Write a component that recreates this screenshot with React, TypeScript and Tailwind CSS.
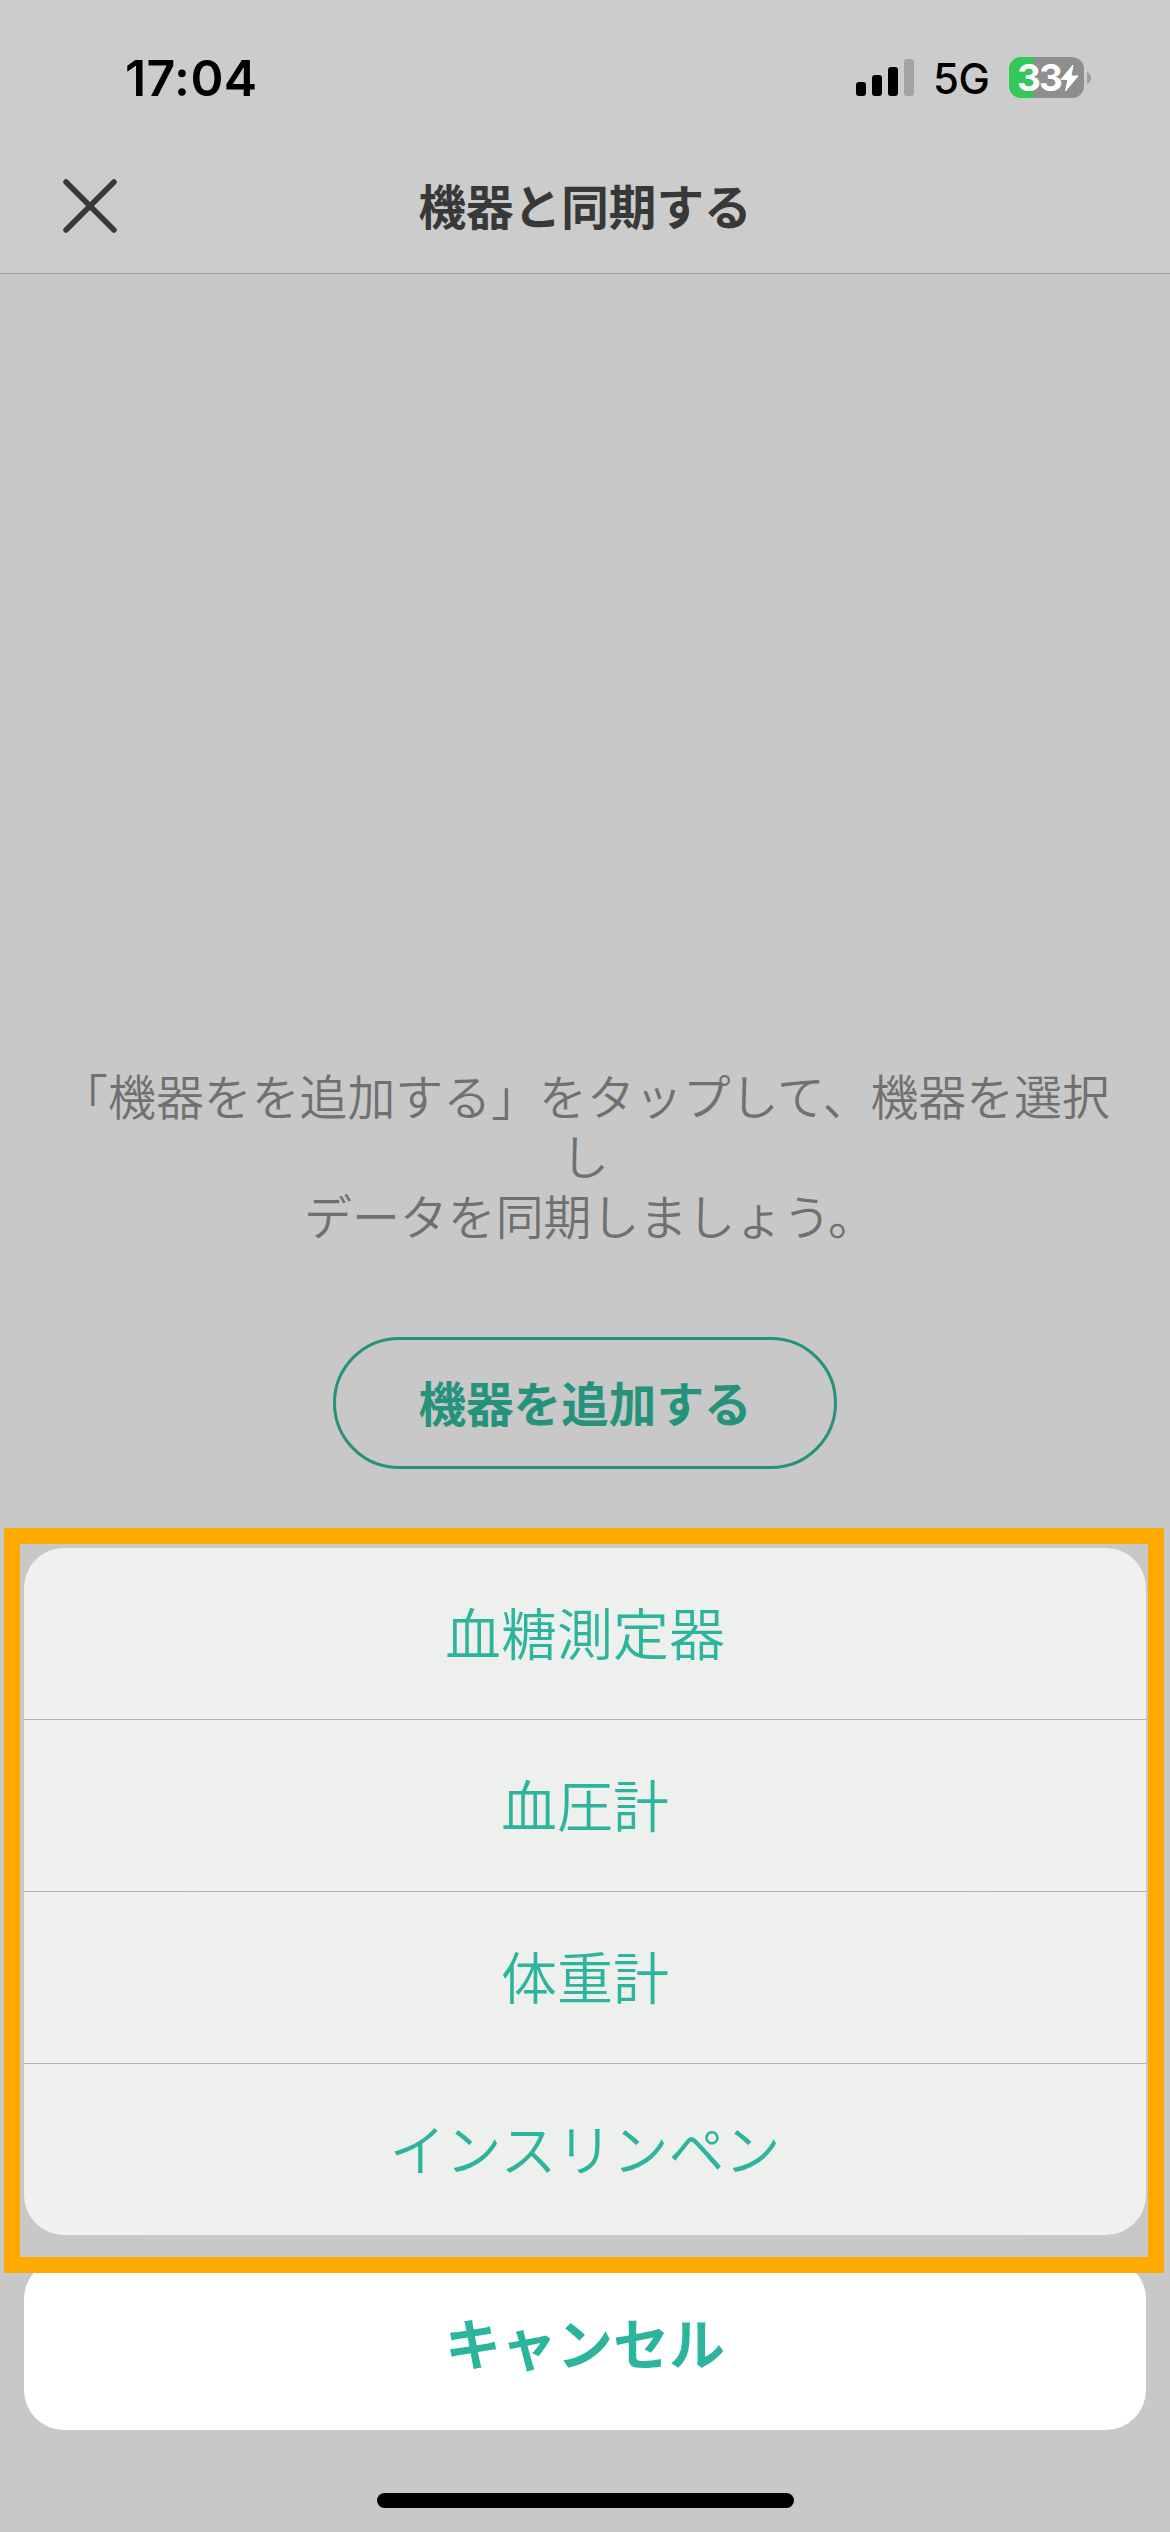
const devices = ['血糖測定器', '血圧計', '体重計', 'インスリンペン']

function SignalIcon() {
  return (
    <svg width="58" height="37" viewBox="0 0 58 37" className="block">
      <rect x="0" y="23" width="10" height="14" rx="3" />
      <rect x="16" y="16" width="10" height="21" rx="3" />
      <rect x="32" y="8" width="10" height="29" rx="3" />
      <rect x="48" y="0" width="10" height="37" rx="3" fill="#a3a3a3" />
    </svg>
  )
}

function Battery() {
  return (
    <div className="flex items-center">
      <div className="flex h-[41px] w-[75px] items-center rounded-[12px] bg-[linear-gradient(90deg,#34c759_25px,#8e8e8e_25px)] pl-[8px]">
        <span className="w-[43px] text-[37px] leading-[41px] font-bold tracking-[-1.8px] text-white">33</span>
        <svg width="19" height="28" viewBox="0 0 19 28" className="block">
          <path d="M13 1 1 15.5h7L5.5 27 18 12h-7z" fill="#fff" stroke="#fff" strokeWidth="1" strokeLinejoin="round" />
        </svg>
      </div>
      <svg width="4" height="12" viewBox="0 0 4 12" className="ml-[3px] block">
        <path d="M0 0c2.4 1 4 3.3 4 6s-1.6 5-4 6z" fill="#a0a0a0" />
      </svg>
    </div>
  )
}

function StatusBar() {
  return (
    <div className="flex h-[156px] items-start justify-between pt-[56px] pr-[79px] pl-[125px] font-['Inter',sans-serif] text-black">
      <span className="text-[50px] leading-[44px] font-semibold tracking-[0.4px]">17:04</span>
      <div className="flex items-start">
        <div className="pt-[3px]">
          <SignalIcon />
        </div>
        <span className="ml-[19px] w-[57px] text-[42px] leading-[46px] font-medium tracking-[-0.5px]">5G</span>
        <div className="ml-[19px] pt-[1px]">
          <Battery />
        </div>
      </div>
    </div>
  )
}

export default function App() {
  return (
    <div
      lang="ja"
      className="relative flex h-[2532px] w-[1170px] flex-col overflow-hidden bg-[#c8c8c8] font-['Noto_Sans_CJK_JP',sans-serif]"
    >
      <div className="h-[274px] border-b border-[#a0a0a0] bg-[#ccc]">
        <StatusBar />
        <header className="grid h-[100px] grid-cols-[180px_1fr_180px] items-center">
          <button className="pl-[63px]" aria-label="閉じる">
            <svg width="54" height="54" viewBox="0 0 54 54" className="block">
              <path d="M3 3 51 51M51 3 3 51" stroke="#383838" strokeWidth="5.5" strokeLinecap="round" />
            </svg>
          </button>
          <h1 className="pb-[2px] text-center text-[47.6px] leading-[60px] font-bold text-[#383838]">機器と同期する</h1>
        </header>
      </div>

      <p className="mt-[790px] px-[58px] text-center text-[47.9px] leading-[60px] font-[350] text-[#707070]">
        「機器をを追加する」をタップして、機器を選択し
        <span className="block pl-[10px]">データを同期しましょう。</span>
      </p>
      <button className="mt-[93px] h-[132px] w-[504px] self-center rounded-full border-[3px] border-[#25927c] pb-[2px] text-[47.6px] leading-[60px] font-bold text-[#25927c]">
        機器を追加する
      </button>

      {/* Action sheet */}
      <div className="mt-[79px] flex flex-col gap-[24px] px-[24px] text-[56px] leading-[80px] text-[#2cb59c]">
        <div className="divide-y divide-[#b0b2b1] overflow-hidden rounded-[40px] bg-[linear-gradient(90deg,#f0f0f0,#eef0ed_25%,#eef0ed_75%,#f0f0f0)]">
          {devices.map((name) => (
            <button key={name} className="box-content block h-[171px] w-full font-[350]">
              <span className="block pb-[6px]">{name}</span>
            </button>
          ))}
        </div>
        <button className="h-[171px] rounded-[40px] bg-white font-bold">
          <span className="block pb-[8px]">キャンセル</span>
        </button>
      </div>
      <div className="mt-[63px] h-[15px] w-[417px] self-center rounded-full bg-black" />

      {/* Highlight around the device list */}
      <div className="pointer-events-none absolute top-[1528px] left-[4px] h-[745px] w-[1160px] border-[16px] border-[#fa0]" />
    </div>
  )
}
